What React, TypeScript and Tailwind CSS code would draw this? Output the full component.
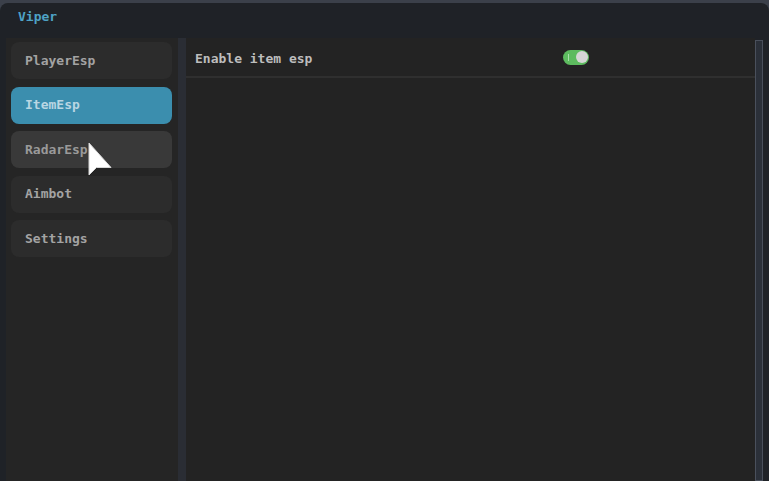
import React, { useState } from 'react';

// --- menu entries ---
const TABS = ['PlayerEsp', 'ItemEsp', 'RadarEsp', 'Aimbot', 'Settings'];

const mono = { fontFamily: '"DejaVu Sans Mono", "Liberation Mono", monospace' };

const Toggle = ({ on }: { on: boolean }) => (
    <div className={`relative w-[26px] h-[15px] rounded-full ${on ? 'bg-[#5dbb5f]' : 'bg-[#444]'}`}>
        <span className="absolute left-[5px] top-[4px] w-[1px] h-[7px] bg-[#c9efc9] opacity-70" />
        <span className={`absolute top-[1.5px] w-[12px] h-[12px] rounded-full bg-[#d6d6d6] ${on ? 'right-[1.5px]' : 'left-[1.5px]'}`} />
    </div>
);

const Cursor = () => (
    <svg className="absolute left-[88px] top-[142px]" width="26" height="38" viewBox="0 0 26 38">
        <path d="M1 1 L1 33 L8.5 25.5 L23 25.5 Z" fill="#ffffff" stroke="#d8d8d8" strokeWidth="1" strokeLinejoin="round" />
    </svg>
);

function App() {
    const [active, setActive] = useState('ItemEsp');
    const [itemEsp, setItemEsp] = useState(true);

    return (
        <div className="w-[769px] h-[481px] overflow-hidden bg-[#3b404a] relative" style={mono}>
            <div className="mt-[3px] h-[478px] rounded-t-[8px] bg-[#1f2227] flex flex-col">
                {/* title bar */}
                <div className="h-[35px] pt-[4px] pl-[18px] text-[13px] font-bold text-[#4ea3c6]">
                    Viper
                </div>

                <div className="flex flex-1 pl-[6px]">
                    {/* sidebar */}
                    <div className="w-[172px] bg-[#252525] pt-[4px] pl-[5px] pr-[6px] flex flex-col gap-[7.5px]">
                        {TABS.map((t) => (
                            <button
                                key={t}
                                onClick={() => setActive(t)}
                                className={`h-[37px] rounded-[8px] text-left pl-[14px] text-[13px] font-bold ${
                                    active === t
                                        ? 'bg-[#3b8eae] text-[#b9d6e3]'
                                        : t === 'RadarEsp'
                                        ? 'bg-[#393939] text-[#9a9a9a]'
                                        : 'bg-[#2c2c2c] text-[#a3a3a3]'
                                }`}
                            >
                                {t}
                            </button>
                        ))}
                    </div>

                    {/* divider */}
                    <div className="w-[8px] bg-[#2a2d34]" />

                    {/* content */}
                    <div className="flex-1 bg-[#232323]">
                        <div className="h-[40px] flex items-center pl-[9px] border-b-2 border-[#2f2f2f]">
                            <span className="w-[368px] mt-[4px] text-[13px] font-bold text-[#bdbdbd]">Enable item esp</span>
                            <button onClick={() => setItemEsp(!itemEsp)}>
                                <Toggle on={itemEsp} />
                            </button>
                        </div>
                    </div>

                    {/* scrollbar */}
                    <div className="w-[8px] mt-[2px] bg-[#2b3039] border border-[#4a505c]" />
                    <div className="w-[6px]" />
                </div>
            </div>
            <Cursor />
        </div>
    );
}

export default App;
